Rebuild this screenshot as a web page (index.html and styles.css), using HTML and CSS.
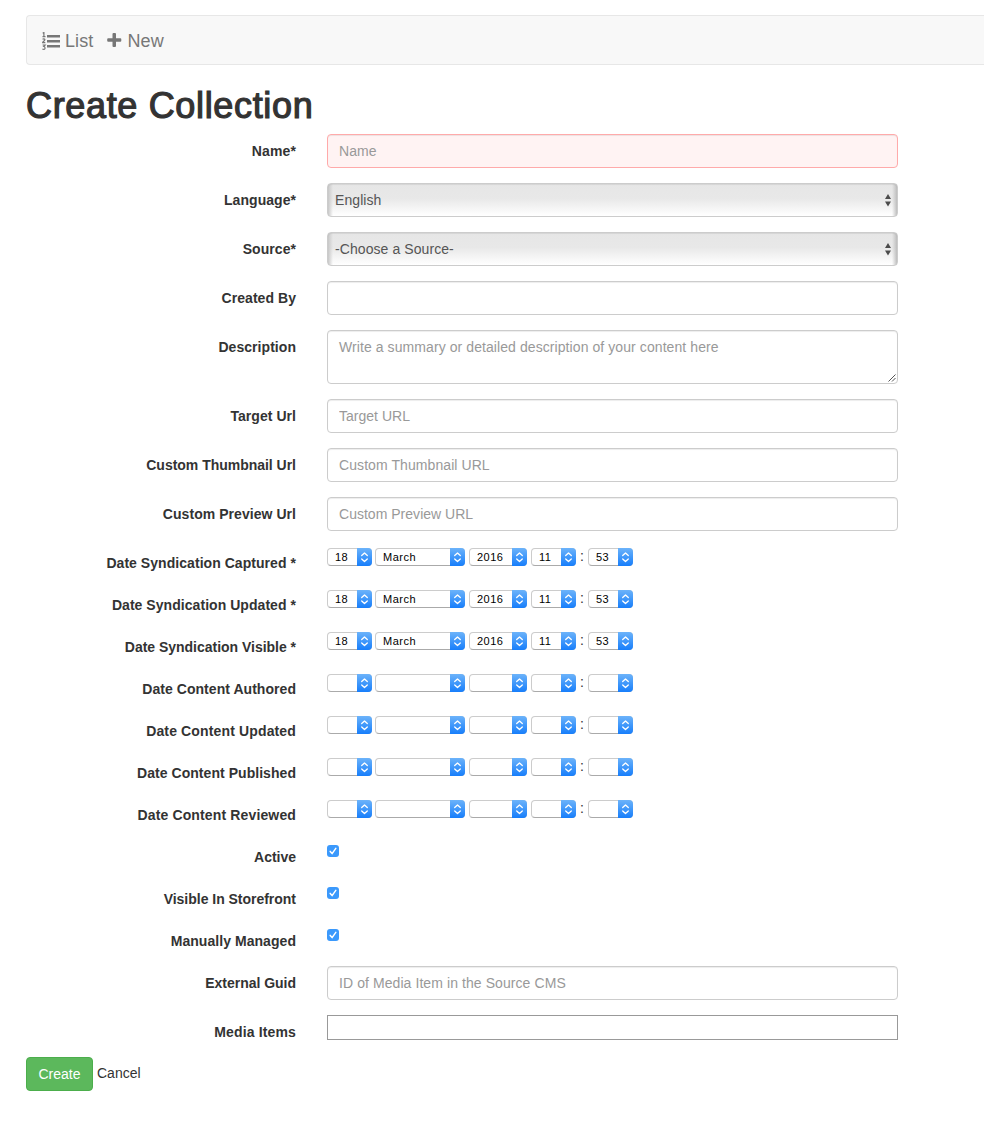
FILE: index.html
```html
<!DOCTYPE html>
<html lang="en">
<head>
<meta charset="utf-8">
<title>Create Collection</title>
<link rel="stylesheet" href="styles.css">
</head>
<body>
<svg class="defs" width="0" height="0" aria-hidden="true">
  <symbol id="updown" viewBox="0 0 15 18"><path d="M4.7 7.6 7.5 5l2.8 2.6M4.7 11 7.5 13.6l2.8-2.6" fill="none" stroke="#fff" stroke-width="1.3" stroke-linecap="round" stroke-linejoin="round"/></symbol>
  <symbol id="arrows" viewBox="0 0 6 13"><path d="M0 5 3 0l3 5zM0 7.5h6l-3 5z" fill="#4c4c4c"/></symbol>
  <symbol id="check" viewBox="0 0 12 12"><path d="M3.2 6.4 5.1 8.6 8.8 3.4" fill="none" stroke="#fff" stroke-width="1.5" stroke-linecap="round" stroke-linejoin="round"/></symbol>
</svg>
<nav class="navbar">
  <a class="nav-link"><svg class="icon-list" viewBox="0 0 18 18"><path d="M5 3h13v2.5H5zM5 8h13v2.5H5zM5 13h13v2.5H5z" fill="#777"/><path d="M.7 1.2 1.9.5V4.600M.5 4.600h3M.6 7.400C1.200 6.500 3 6.600 2.900 7.800 2.800 8.700 1 9.300.6 10.700H3.300M.6 13h2.500L1.800 14.500C3.400 14.500 3.500 17.300 1.900 17.300 1.200 17.300.8 17.200.4 16.800" fill="none" stroke="#777" stroke-width="1.2"/></svg><span class="nav-text">List</span></a>
  <a class="nav-link"><svg class="icon-plus" viewBox="0 0 15 15"><path d="M5.500 1Q5.500 0 6.500 0H8Q9 0 9 1V5.200H13.300Q14.300 5.200 14.300 6.200V7.800Q14.300 8.800 13.300 8.800H9V13Q9 14 8 14H6.500Q5.500 14 5.500 13V8.800H1.200Q.2 8.800.2 7.800V6.200Q.2 5.200 1.200 5.200H5.500z" fill="#777"/></svg><span class="nav-text">New</span></a>
</nav>
<h1 class="title"><span>Create Collection</span></h1>
<form class="form">
  <div class="row"><label class="label wide">Name*</label><input class="control invalid" placeholder="Name"></div>
  <div class="row"><label class="label">Language*</label><div class="control select"><span>English</span><svg class="select-arrows"><use href="#arrows"/></svg></div></div>
  <div class="row"><label class="label">Source*</label><div class="control select"><span>-Choose a Source-</span><svg class="select-arrows"><use href="#arrows"/></svg></div></div>
  <div class="row"><label class="label">Created By</label><input class="control"></div>
  <div class="row"><label class="label">Description</label><div class="area-wrap"><textarea class="control area" placeholder="Write a summary or detailed description of your content here"></textarea><svg class="grip" viewBox="0 0 8 8"><path d="M.5 7.500 7.500.5M4 7.500 7.500 4" stroke="#555" stroke-width="1" fill="none"/></svg></div></div>
  <div class="row"><label class="label">Target Url</label><input class="control snug" placeholder="Target URL"></div>
  <div class="row"><label class="label tight">Custom Thumbnail Url</label><input class="control" placeholder="Custom Thumbnail URL"></div>
  <div class="row"><label class="label">Custom Preview Url</label><input class="control snug" placeholder="Custom Preview URL"></div>
  <div class="row"><label class="label">Date Syndication Captured *</label><div class="date"><span class="pick day">18<svg><use href="#updown"/></svg></span><span class="pick month">March<svg><use href="#updown"/></svg></span><span class="pick year">2016<svg><use href="#updown"/></svg></span><span class="pick hour">11<svg><use href="#updown"/></svg></span><span class="colon">:</span><span class="pick minute">53<svg><use href="#updown"/></svg></span></div></div>
  <div class="row"><label class="label">Date Syndication Updated *</label><div class="date"><span class="pick day">18<svg><use href="#updown"/></svg></span><span class="pick month">March<svg><use href="#updown"/></svg></span><span class="pick year">2016<svg><use href="#updown"/></svg></span><span class="pick hour">11<svg><use href="#updown"/></svg></span><span class="colon">:</span><span class="pick minute">53<svg><use href="#updown"/></svg></span></div></div>
  <div class="row"><label class="label tight">Date Syndication Visible *</label><div class="date"><span class="pick day">18<svg><use href="#updown"/></svg></span><span class="pick month">March<svg><use href="#updown"/></svg></span><span class="pick year">2016<svg><use href="#updown"/></svg></span><span class="pick hour">11<svg><use href="#updown"/></svg></span><span class="colon">:</span><span class="pick minute">53<svg><use href="#updown"/></svg></span></div></div>
  <div class="row"><label class="label">Date Content Authored</label><div class="date"><span class="pick day"><svg><use href="#updown"/></svg></span><span class="pick month"><svg><use href="#updown"/></svg></span><span class="pick year"><svg><use href="#updown"/></svg></span><span class="pick hour"><svg><use href="#updown"/></svg></span><span class="colon">:</span><span class="pick minute"><svg><use href="#updown"/></svg></span></div></div>
  <div class="row"><label class="label wide">Date Content Updated</label><div class="date"><span class="pick day"><svg><use href="#updown"/></svg></span><span class="pick month"><svg><use href="#updown"/></svg></span><span class="pick year"><svg><use href="#updown"/></svg></span><span class="pick hour"><svg><use href="#updown"/></svg></span><span class="colon">:</span><span class="pick minute"><svg><use href="#updown"/></svg></span></div></div>
  <div class="row"><label class="label">Date Content Published</label><div class="date"><span class="pick day"><svg><use href="#updown"/></svg></span><span class="pick month"><svg><use href="#updown"/></svg></span><span class="pick year"><svg><use href="#updown"/></svg></span><span class="pick hour"><svg><use href="#updown"/></svg></span><span class="colon">:</span><span class="pick minute"><svg><use href="#updown"/></svg></span></div></div>
  <div class="row"><label class="label wide">Date Content Reviewed</label><div class="date"><span class="pick day"><svg><use href="#updown"/></svg></span><span class="pick month"><svg><use href="#updown"/></svg></span><span class="pick year"><svg><use href="#updown"/></svg></span><span class="pick hour"><svg><use href="#updown"/></svg></span><span class="colon">:</span><span class="pick minute"><svg><use href="#updown"/></svg></span></div></div>
  <div class="row"><label class="label tight">Active</label><svg class="checkbox"><use href="#check"/></svg></div>
  <div class="row"><label class="label tight">Visible In Storefront</label><svg class="checkbox"><use href="#check"/></svg></div>
  <div class="row"><label class="label">Manually Managed</label><svg class="checkbox"><use href="#check"/></svg></div>
  <div class="row"><label class="label tight">External Guid</label><input class="control" placeholder="ID of Media Item in the Source CMS"></div>
  <div class="row"><label class="label wide">Media Items</label><div class="media-box"></div></div>
  <div class="actions"><button type="button" class="create">Create</button><a class="cancel">Cancel</a></div>
</form>
</body>
</html>
```
FILE: styles.css
```css
* { box-sizing: border-box; }
body {
  margin: 0;
  padding: 15px 0 0 26px;
  background: #fff;
  color: #333;
  font: 14px/20px "Liberation Sans", Arial, sans-serif;
  overflow: hidden;
}
.defs { display: block; }
.navbar {
  display: flex;
  align-items: center;
  gap: 14px;
  height: 50px;
  padding-left: 15px;
  background: #f8f8f8;
  border: 1px solid #e7e7e7;
  border-right: 0;
  border-radius: 4px 0 0 4px;
  color: #777;
  font-size: 18px;
}
.nav-link { display: flex; align-items: center; gap: 5px; }
.nav-text { padding-top: 2px; letter-spacing: .1px; }
.icon-list { width: 18px; height: 18px; margin-top: 1px; }
.icon-plus { width: 15px; height: 15px; }
.title {
  margin: 21px 0 0;
  height: 48px;
  font-size: 36px;
  line-height: 40px;
  font-weight: 400;
  letter-spacing: .66px;
  -webkit-text-stroke: 1.2px #333;
}
.row {
  display: grid;
  grid-template-columns: 270px 571px;
  column-gap: 31px;
  align-items: start;
  margin-bottom: 15px;
}
.label {
  padding-top: 7px;
  text-align: right;
  font-weight: 700;
  letter-spacing: .05px;
  white-space: nowrap;
}
.label.wide { letter-spacing: .14px; }
.label.tight { letter-spacing: -.02px; }
.control {
  display: block;
  width: 571px;
  height: 34px;
  margin: 0;
  padding: 6px 11px;
  border: 1px solid #ccc;
  border-radius: 4px;
  background: #fff;
  box-shadow: inset 0 1px 1px rgba(0, 0, 0, .075);
  color: #555;
  font: inherit;
  letter-spacing: .08px;
}
.control.snug { letter-spacing: .02px; }
.control::placeholder { color: #999; opacity: 1; }
.invalid { background: #fff3f3; border-color: #faa; }
.select {
  display: flex;
  align-items: center;
  justify-content: space-between;
  padding: 0 7px;
  background:
    linear-gradient(90deg, #c8c8c8, rgba(200, 200, 200, 0)) left / 5px 100% no-repeat,
    linear-gradient(270deg, #bebebe, rgba(190, 190, 190, 0)) right / 5px 100% no-repeat,
    linear-gradient(#e6e6e6, #e8e8e8 45%, #fff);
}
.select-arrows { width: 6px; height: 13px; margin-right: -1px; }
.area-wrap { position: relative; }
.area { height: 54px; resize: none; overflow: hidden; }
.grip { position: absolute; right: 2px; bottom: 2px; width: 8px; height: 8px; }
.date { display: flex; padding-top: 2px; }
.pick {
  display: flex;
  height: 18px;
  padding-left: 7px;
  border: 1px solid #ccc;
  border-bottom-color: #aaa;
  border-radius: 4px;
  color: #000;
  font-size: 11px;
  line-height: 17px;
  letter-spacing: .5px;
}
.pick svg {
  width: 15px;
  height: 18px;
  margin: -1px -1px -1px auto;
  border-radius: 0 4px 4px 0;
  background: linear-gradient(#6cb3fa, #177efb);
}
.day, .hour, .minute { width: 45px; }
.month { width: 90px; margin: 0 4px 0 3px; }
.year { width: 58px; margin-right: 4px; }
.colon { width: 12px; height: 18px; text-align: center; line-height: 17px; }
.checkbox {
  width: 12px;
  height: 12px;
  margin-top: 5px;
  border-radius: 3px;
  background: #3b99fc;
}
.media-box { height: 25px; border: 1px solid #999; }
.actions { display: flex; gap: 4px; }
.create {
  width: 67px;
  height: 34px;
  padding: 0;
  border: 1px solid #4cae4c;
  border-radius: 4px;
  background: #5cb85c;
  color: #fff;
  font: inherit;
}
.cancel { line-height: 32px; }
```
